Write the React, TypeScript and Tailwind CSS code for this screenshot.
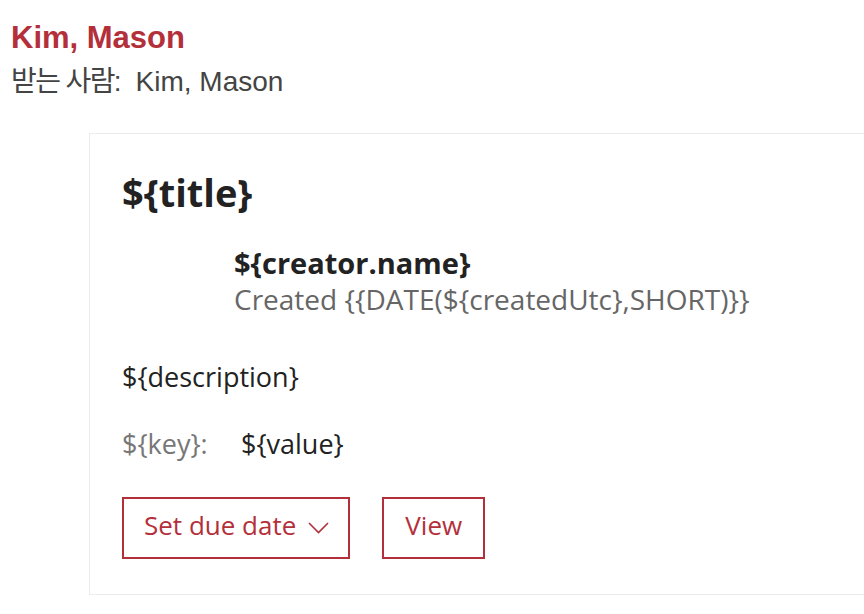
import React from "react";

const cardFont = { fontFamily: '"Open Sans", "Noto Sans CJK KR", sans-serif' };

export default function App() {
  return (
    <div className="min-h-[614px] w-[864px] overflow-hidden bg-white">
      {/* Header */}
      <div className="pl-[11px] pt-[20px] font-['Liberation_Sans','Noto_Sans_CJK_KR',sans-serif]">
        <h1 className="text-[31px] font-semibold leading-[36px] text-[#b3303b]">Kim, Mason</h1>
        <p className="mt-[9px] text-[28px] leading-[34px] text-[#444]">
          <span className="tracking-[-1.6px]">받는 사람:</span>&nbsp; Kim, Mason
        </p>
      </div>

      {/* Card */}
      <div
        className="ml-[89px] mt-[34px] w-[800px] border border-[#ececec] pb-[35px] pl-[32px] pt-[36px]"
        style={cardFont}
      >
        <h2 className="text-[38px] font-bold leading-[44px] text-[#222]">{"${title}"}</h2>

        <div className="ml-[112px] mt-[31px]">
          <p className="text-[29px] font-bold leading-[36px] text-[#222]">{"${creator.name}"}</p>
          <p className="text-[28px] leading-[36px] text-[#666]">
            {"Created {{DATE(${createdUtc},SHORT)}}"}
          </p>
        </div>

        <p className="mt-[42px] text-[27px] leading-[36px] text-[#222]">{"${description}"}</p>

        <div className="mt-[31px] flex text-[27px] leading-[36px]">
          <span className="w-[119px] text-[#777]">{"${key}:"}</span>
          <span className="text-[#222]">{"${value}"}</span>
        </div>

        <div className="mt-[35px] flex gap-[32px]">
          <button className="flex h-[62px] items-center gap-[12px] border-2 border-[#b3303b] pb-[6px] pl-[20px] pr-[19px] text-[26px] text-[#b3303b]">
            Set due date
            <svg className="mt-[6px]" width="21" height="12" viewBox="0 0 21 12" fill="none" stroke="currentColor" strokeWidth="1.6">
              <path d="M1 1 L10.5 10.5 L20 1" />
            </svg>
          </button>
          <button className="flex h-[62px] items-center border-2 border-[#b3303b] px-[21px] pb-[6px] text-[26px] text-[#b3303b]">
            View
          </button>
        </div>
      </div>
    </div>
  );
}
